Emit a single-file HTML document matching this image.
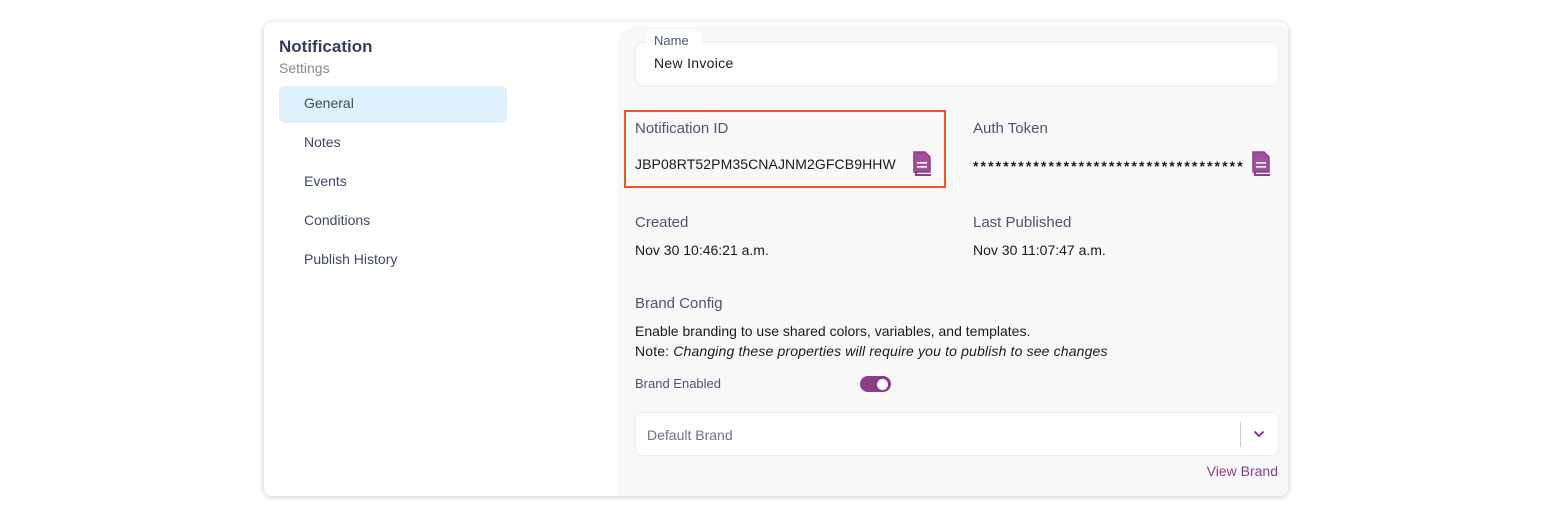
<!DOCTYPE html>
<html><head><style>
*{box-sizing:border-box;margin:0;padding:0}
body{width:1552px;height:519px;background:#fff;font-family:"Liberation Sans",sans-serif;position:relative;overflow:hidden}
.a{position:absolute;white-space:nowrap}
.card{position:absolute;left:264px;top:22px;width:1024px;height:474px;background:#fff;border-radius:8px;box-shadow:0 1px 6px rgba(0,0,0,.22)}
.right{position:absolute;left:618px;top:26px;width:670px;height:470px;background:#f8f8f8;border-radius:16px 8px 8px 0}
.lab{color:#4a5570;font-size:15px}
.val{color:#1a1a1a;font-size:14px}
.nav{color:#3d4766;font-size:14px}
</style></head><body>
<div class="card"></div>
<div class="right"></div>
<div class="a" style="left:279px;top:37px;font-size:17px;font-weight:bold;color:#343e5c">Notification</div>
<div class="a" style="left:279px;top:60px;font-size:14px;color:#888">Settings</div>
<div class="a" style="left:279px;top:86px;width:228px;height:37px;background:#dff0fd;border-radius:6px"></div>
<div class="a nav" style="left:304px;top:95px">General</div>
<div class="a nav" style="left:304px;top:134px">Notes</div>
<div class="a nav" style="left:304px;top:173px">Events</div>
<div class="a nav" style="left:304px;top:212px">Conditions</div>
<div class="a nav" style="left:304px;top:251px">Publish History</div>

<div class="a" style="left:635px;top:42px;width:644px;height:44px;background:#fff;border:1px solid #ececec;border-radius:8px"></div>
<div class="a" style="left:646px;top:31px;width:56px;height:16px;background:#fff;border-radius:6px 6px 0 0"></div>
<div class="a" style="left:654px;top:33px;font-size:13px;color:#4a5570">Name</div>
<div class="a" style="left:654px;top:55px;font-size:14px;color:#1a1a1a;letter-spacing:.3px">New Invoice</div>

<div class="a" style="left:624px;top:110px;width:322px;height:78px;border:2px solid #e8562a"></div>
<div class="a lab" style="left:635px;top:120px">Notification ID</div>
<div class="a val" style="left:635px;top:156px;letter-spacing:.1px">JBP08RT52PM35CNAJNM2GFCB9HHW</div>
<svg class="a" style="left:912px;top:151px" width="22" height="26" viewBox="0 0 22 26"><path d="M4 4v20h15" fill="none" stroke="#8c3d88" stroke-width="2"/><path d="M2 1h11l5 5v15H2z" fill="#a34f9f" stroke="#8c3d88" stroke-width="1.5"/><rect x="5" y="11" width="10" height="1.6" fill="#fff"/><rect x="5" y="15" width="10" height="1.6" fill="#fff"/></svg>
<div class="a lab" style="left:973px;top:120px">Auth Token</div>
<div class="a val" style="left:973px;top:158px;letter-spacing:2.1px;font-weight:bold">************************************</div>
<svg class="a" style="left:1251px;top:151px" width="22" height="26" viewBox="0 0 22 26"><path d="M4 4v20h15" fill="none" stroke="#8c3d88" stroke-width="2"/><path d="M2 1h11l5 5v15H2z" fill="#a34f9f" stroke="#8c3d88" stroke-width="1.5"/><rect x="5" y="11" width="10" height="1.6" fill="#fff"/><rect x="5" y="15" width="10" height="1.6" fill="#fff"/></svg>

<div class="a lab" style="left:635px;top:214px">Created</div>
<div class="a val" style="left:635px;top:242px">Nov 30 10:46:21 a.m.</div>
<div class="a lab" style="left:973px;top:214px">Last Published</div>
<div class="a val" style="left:973px;top:242px">Nov 30 11:07:47 a.m.</div>

<div class="a lab" style="left:635px;top:295px">Brand Config</div>
<div class="a val" style="left:635px;top:323px">Enable branding to use shared colors, variables, and templates.</div>
<div class="a val" style="left:635px;top:343px;letter-spacing:.15px">Note: <i>Changing these properties will require you to publish to see changes</i></div>
<div class="a" style="left:635px;top:376px;font-size:13px;color:#4a5570">Brand Enabled</div>
<div class="a" style="left:860px;top:376px;width:31px;height:16px;background:#8c3d88;border-radius:8px"><div style="position:absolute;right:3px;top:2.5px;width:11px;height:11px;background:#fff;border-radius:50%"></div></div>

<div class="a" style="left:635px;top:412px;width:644px;height:44px;background:#fff;border:1px solid #ececec;border-radius:8px"></div>
<div class="a" style="left:647px;top:427px;font-size:14px;color:#6b7388">Default Brand</div>
<div class="a" style="left:1240px;top:422px;width:1px;height:25px;background:#ccc"></div>
<svg class="a" style="left:1253px;top:430px" width="12" height="8" viewBox="0 0 12 8"><path d="M1.5 1.5l4.5 4.5 4.5-4.5" fill="none" stroke="#8c3d88" stroke-width="2"/></svg>
<div class="a" style="right:274px;top:463px;font-size:14px;color:#8c3d88">View Brand</div>
</body></html>
